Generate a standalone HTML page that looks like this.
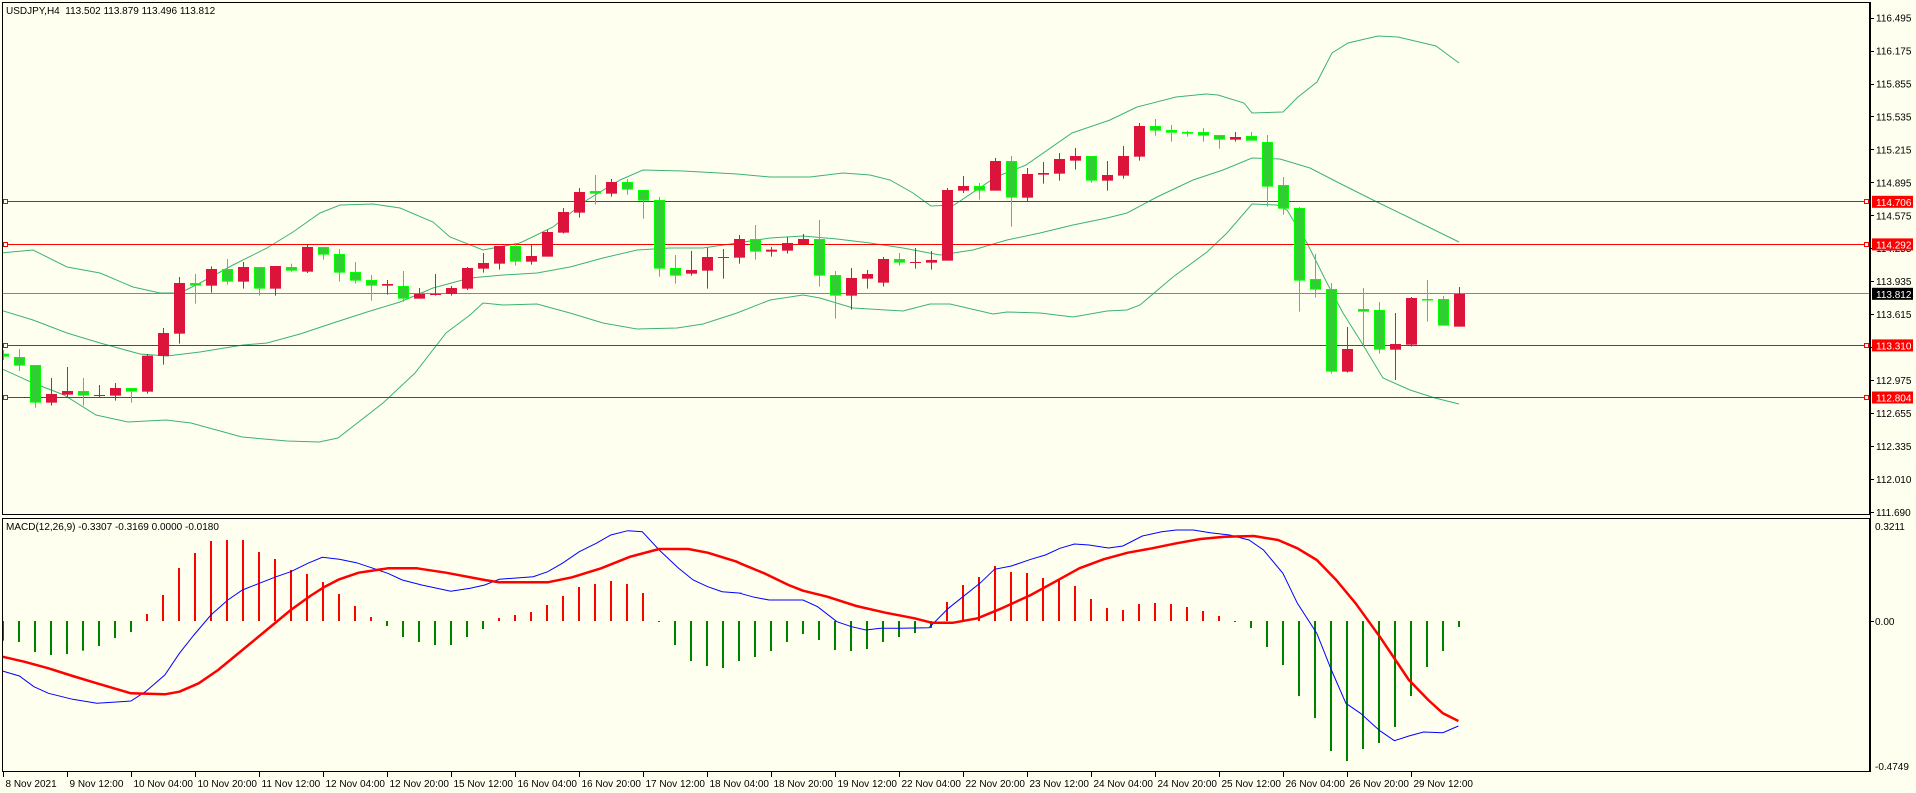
<!DOCTYPE html>
<html><head><meta charset="utf-8"><style>
html,body{margin:0;padding:0;background:#FFFFF0;}
svg{display:block;font-family:"Liberation Sans",Tahoma,sans-serif;}
</style></head><body>
<svg id="s" width="1916" height="793" xmlns="http://www.w3.org/2000/svg">
<rect width="1916" height="793" fill="#FFFFF0"/>
<g id="bands" fill="none" stroke="#3CB371" stroke-width="1"></g>
<g id="lines"></g>
<g id="candles"></g>
<g id="macd"></g>
<rect x="2.5" y="2.5" width="1867" height="512" fill="none" stroke="#000"/>
<rect x="2.5" y="518.5" width="1867" height="253" fill="none" stroke="#000"/>
<text x="6" y="14" font-size="10" fill="#000">USDJPY,H4&#160; 113.502 113.879 113.496 113.812</text>
<text x="6" y="530" font-size="10" fill="#000">MACD(12,26,9) -0.3307 -0.3169 0.0000 -0.0180</text>
<g id="axis" font-size="10" fill="#000"></g>
</svg>
<script>
var NS="http://www.w3.org/2000/svg";
function el(p,t,a,txt){var e=document.createElementNS(NS,t);for(var k in a)e.setAttribute(k,a[k]);if(txt!=null)e.textContent=txt;p.appendChild(e);return e;}
var S=document.getElementById('s');
function py(p){return 17.7+(116.495-p)*102.9;}
var segs=[
[170,[[551,560,540,570,'g'],[561,587,537,603,'g'],[585,698,585,713,'g'],[672,698,624,707,'r'],[663,674,591,684,'r'],[663,677,624,707,'g'],[675,678,645,684,'r'],[654,677,639,692,'r'],[654,665,654,698,'g'],[557,665,552,671,'r'],[489,558,474,584,'r'],[339,491,321,521,'r'],[339,347,312,401,'g'],[297,347,289,368,'r'],[297,335,267,344,'g'],[291,335,276,356,'r'],[291,356,291,377,'g'],[288,356,288,377,'r'],[291,302,281,305,'g'],[231,305,225,309,'r'],[231,254,231,269,'g'],[252,308,237,335,'g'],[306,332,276,341,'g'],[330,347,315,392,'g'],[342,347,330,374,'r'],[348,386,303,395,'g'],[372,386,354,386,'r'],[372,375,312,377,'r'],[354,372,348,377,'r']]],
[160,[[324,386,321,390,'r'],[309,326,279,338,'r'],[258,311,258,329,'r'],[258,305,249,317,'g'],[288,305,255,314,'r'],[216,290,210,290,'r'],[156,218,144,221,'r'],[96,158,84,173,'r'],[93,101,45,134,'g'],[66,101,57,110,'r'],[66,89,57,104,'g'],[90,122,90,176,'g'],[120,326,111,350,'g'],[324,347,285,371,'g'],[330,341,273,347,'r'],[291,332,264,386,'r'],[291,293,267,356,'r'],[237,293,225,311,'r'],[237,275,195,299,'g'],[269,275,261,290,'r'],[249,272,231,281,'r'],[237,252,222,252,'r'],[237,347,180,380,'g'],[345,407,333,476,'g'],[354,407,324,449,'r'],[342,356,330,386,'r'],[297,368,291,380,'r'],[297,308,279,317,'g'],[306,308,264,326,'r'],[300,308,273,329,'r']]],
[100,[[270,482,264,482,'r'],[258,272,228,279,'r'],[258,272,249,299,'g'],[183,272,174,272,'r'],[183,293,168,380,'g'],[222,293,204,305,'r'],[219,224,186,251,'r'],[177,221,159,242,'r'],[168,182,144,209,'r'],[168,242,168,248,'g'],[225,242,183,272,'r'],[168,227,138,236,'r'],[78,170,69,182,'r'],[78,92,57,107,'g'],[90,98,75,125,'g'],[96,101,93,110,'g'],[96,107,84,125,'g'],[105,119,105,146,'g'],[111,119,96,125,'r'],[108,122,96,122,'g'],[126,260,105,320,'g'],[255,326,231,344,'g'],[324,542,321,635,'g'],[537,569,462,593,'g']]],
[120,[[507,755,489,761,'g'],[687,755,621,758,'r'],[567,575,504,680,'g'],[570,689,546,701,'g'],[672,689,579,780,'r'],[534,674,531,680,'r'],[537,540,480,605,'g'],[537,617,528,617,'g'],[522,620,501,620,'r']]]
];
var C=[];segs.forEach(function(s){s[1].forEach(function(d){C.push([s[0]+d[0]/3,s[0]+d[1]/3,s[0]+d[2]/3,s[0]+d[3]/3,d[4]]);});});
var L=document.getElementById('lines');
el(L,'line',{x1:3,x2:1869,y1:293.5,y2:293.5,stroke:'#778899'});
[[114.706,201.5],[114.292,244.5],[113.310,345.5],[112.804,397.5]].forEach(function(r){
 el(L,'line',{x1:3,x2:1869,y1:r[1],y2:r[1],stroke:'#FF0000'});
 el(L,'rect',{x:3.5,y:r[1]-2,width:4,height:4,fill:'#FFFFF0',stroke:'#FF0000'});
 el(L,'rect',{x:1864.5,y:r[1]-2,width:4,height:4,fill:'#FFFFF0',stroke:'#FF0000'});
});
var G=document.getElementById('candles');
var clip=el(el(S,'defs',{}),'clipPath',{id:'cp'});el(clip,'rect',{x:3,y:3,width:1866,height:511});
G.setAttribute('clip-path','url(#cp)');
C.forEach(function(c,i){var x=3.3+16*i;var wx=Math.round(x)+0.5;
 var col=c[4]=='r'?'#DC143C':'#32CD32',wc=c[4]=='r'?'#DC143C':'#00FF00';
 el(G,'line',{x1:wx,x2:wx,y1:c[2],y2:c[3],stroke:wc});
 var h=Math.max(c[1]-c[0],1);
 if(c[4]=='r')el(G,'rect',{x:Math.round(x)-5,y:c[0],width:11,height:h,fill:col});
 else el(G,'rect',{x:Math.round(x)-4.5,y:c[0]+0.5,width:10,height:Math.max(h-1,0.5),fill:col,stroke:wc});
});
var B=document.getElementById('bands');B.setAttribute('clip-path','url(#cp)');
var up=[[0,253],[33,250],[67,267],[100,273],[133,287],[160,293],[180,293],[200,283],[233,265],[267,248],[293,232],[320,213],[340,205],[373,204],[400,208],[433,222],[450,237],[483,250],[520,243],[553,227],[587,200],[620,180],[643,170],[683,171],[737,174],[770,177],[810,177],[843,173],[870,175],[890,180],[913,193],[931,206],[954,205],[996,177],[1026,165],[1072,133],[1110,120],[1137,107],[1176,97],[1206,94],[1218,95],[1244,103],[1252,113],[1283,112],[1298,97],[1317,82],[1332,53],[1348,43],[1378,36],[1398,37],[1436,46],[1459,63]];
var mid=[[0,310],[33,320],[67,333],[100,343],[140,354],[167,356],[200,352],[243,345],[267,343],[300,334],[333,323],[367,312],[400,302],[433,288],[470,278],[503,275],[537,273],[570,267],[603,258],[637,250],[670,248],[703,248],[737,243],[770,238],[803,236],[837,239],[870,243],[903,248],[940,255],[973,250],[1007,240],[1040,233],[1073,225],[1107,218],[1127,213],[1157,197],[1193,180],[1223,170],[1252,158],[1280,159],[1310,168],[1343,185],[1377,202],[1410,218],[1459,242]];
var lo=[[0,368],[33,383],[64,395],[96,415],[128,422],[166,420],[191,423],[242,437],[287,441],[319,442],[338,438],[383,403],[415,373],[446,333],[470,315],[483,303],[503,305],[537,304],[570,313],[603,323],[637,329],[677,328],[703,324],[737,313],[770,300],[803,295],[820,298],[853,308],[903,311],[930,304],[950,304],[993,314],[1007,312],[1040,313],[1073,317],[1107,311],[1127,310],[1140,305],[1173,277],[1207,252],[1227,233],[1252,204],[1277,205],[1287,210],[1307,243],[1327,283],[1343,313],[1360,340],[1383,378],[1410,390],[1435,398],[1459,404]];
[up,mid,lo].forEach(function(a){el(B,'polyline',{points:a.map(function(p){return p.join(',')}).join(' ')});});
var M=document.getElementById('macd');
var h1=[362,366,396,405,402,392,378,354,336,282,225,144,99,63,60,60,96,117,150,162,186,222,258,291,318,351,366,375,375,351,327,294,285,276,255,228,201,192,183,192,219,305,375,423,438,444,423,411,393,366,342,360,390,393,387,366,351,339,324,246,195,171,138,156,159,174,180,198,237,264,270,252,249,252,261,273,288,305,324,381,435,528,594,693,723,687,669,621,528,441,393,321];
h1.forEach(function(v,i){var x=Math.round(3.3+16*i);var y=520+v/3;var z=621;
 var col=v<303?'#FF0000':'#008000';
 el(M,'rect',{x:x-1,y:Math.min(y,z),width:2,height:Math.max(Math.abs(y-z),1),fill:col});
});
var bl8=[[5,453],[40,468],[70,500],[100,520],[150,538],[200,550],[270,543],[300,515],[340,465],[370,400],[400,345],[435,285],[470,240],[500,210],[535,190],[570,170],[600,155],[635,130],[665,112],[700,118],[735,128],[770,145],[800,160],[830,180],[870,195],[930,214],[970,205],[1000,195],[1030,178],[1100,170],[1130,155],[1160,130],[1195,95],[1230,70],[1260,45],[1295,32],[1325,35],[1360,90],[1400,145],[1430,180],[1460,200],[1490,215],[1530,220]];
var bl9=[[0,220],[30,232],[60,240],[130,240],[160,260],[200,305],[230,320],[260,330],[290,325],[330,325],[390,323],[430,265],[460,230],[495,190],[525,148],[560,138],[600,118],[630,105],[660,85],[690,72],[720,75],[760,84],[790,78],[830,48],[870,35],[900,30],[935,30],[970,38],[1010,45],[1050,60],[1080,90],[1120,160],[1150,250],[1190,340],[1220,450],[1250,550],[1280,580],[1320,632],[1350,662],[1380,648],[1410,636],[1450,638],[1482,618]];
var rd8=[[5,410],[50,425],[100,445],[150,468],[200,490],[270,520],[340,523],[370,515],[410,490],[450,450],[500,390],[550,330],[600,270],[640,228],[670,200],[700,178],[740,158],[800,145],[860,145],[920,158],[1000,180],[1030,187],[1130,187],[1180,172],[1240,145],[1300,110],[1360,87],[1420,87],[1460,98],[1520,125]];
var rd9=[[0,130],[50,160],[100,195],[130,212],[180,230],[240,258],[300,278],[360,295],[395,308],[440,308],[490,295],[540,265],[600,225],[650,185],[700,145],[750,118],[800,98],[850,85],[900,70],[950,57],[1000,50],[1060,48],[1110,60],[1150,85],[1190,120],[1230,180],[1270,250],[1320,350],[1380,480],[1420,540],[1450,580],[1482,603]];
function cv(a,ox){return a.map(function(p){return (ox+p[0]/2.063).toFixed(1)+','+(520+p[1]/3).toFixed(1)}).join(' ');}
el(M,'polyline',{points:cv(bl8,0)+' '+cv(bl9,740),fill:'none',stroke:'#0000FF','stroke-width':1});
el(M,'polyline',{points:cv(rd8,0)+' '+cv(rd9,740),fill:'none',stroke:'#FF0000','stroke-width':2.5,'stroke-linejoin':'round'});
var A=document.getElementById('axis');
el(A,'line',{x1:1870.5,x2:1870.5,y1:2,y2:772,stroke:'#000'});
['116.495','116.175','115.855','115.535','115.215','114.895','114.575','114.255','113.935','113.615','113.295','112.975','112.655','112.335','112.010','111.690'].forEach(function(p){var y=py(+p);
 el(A,'line',{x1:1870,x2:1874,y1:Math.round(y)+0.5,y2:Math.round(y)+0.5,stroke:'#000'});
 el(A,'text',{x:1876,y:y+4},p);});
[['114.706',201.8,'#FF0000'],['114.292',244.4,'#FF0000'],['113.812',293.8,'#000'],['113.310',345.4,'#FF0000'],['112.804',397.5,'#FF0000']].forEach(function(r){
 el(A,'rect',{x:1872,y:r[1]-6,width:41,height:12,fill:r[2]});
 el(A,'text',{x:1876,y:r[1]+4,fill:'#fff'},r[0]);});
[['0.3211',530],['0.00',625],['-0.4749',770]].forEach(function(r){el(A,'text',{x:1875,y:r[1]},r[0]);});
el(A,'line',{x1:1870,x2:1874,y1:621.5,y2:621.5,stroke:'#000'});
var labs=['8 Nov 2021','9 Nov 12:00','10 Nov 04:00','10 Nov 20:00','11 Nov 12:00','12 Nov 04:00','12 Nov 20:00','15 Nov 12:00','16 Nov 04:00','16 Nov 20:00','17 Nov 12:00','18 Nov 04:00','18 Nov 20:00','19 Nov 12:00','22 Nov 04:00','22 Nov 20:00','23 Nov 12:00','24 Nov 04:00','24 Nov 20:00','25 Nov 12:00','26 Nov 04:00','26 Nov 20:00','29 Nov 12:00'];
labs.forEach(function(t,k){var x=Math.round(3.3+64*k)+0.5;
 el(A,'line',{x1:x,x2:x,y1:772,y2:777,stroke:'#000'});
 el(A,'text',{x:x+2,y:787},t);});
</script>
</body></html>
